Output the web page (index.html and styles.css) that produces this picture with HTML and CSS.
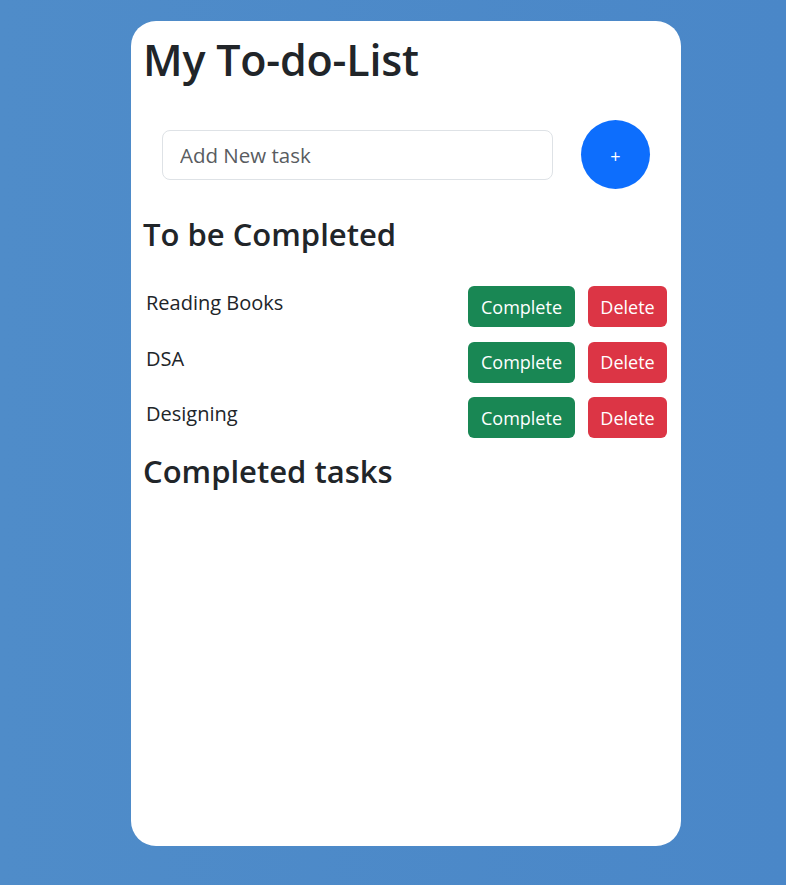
FILE: index.html
```html
<!DOCTYPE html>
<html lang="en">
<head>
<meta charset="utf-8">
<title>My To-do-List</title>
<link rel="stylesheet" href="styles.css">
</head>
<body>
<main class="card">
  <h1 class="title">My To-do-List</h1>
  <div class="add-row">
    <input class="task-input" type="text" placeholder="Add New task">
    <button class="add-btn" type="button">+</button>
  </div>
  <h2 class="section">To be Completed</h2>
  <ul class="tasks">
    <li class="task">
      <span class="task-name">Reading Books</span>
      <div class="actions">
        <button class="btn btn-complete" type="button">Complete</button>
        <button class="btn btn-delete" type="button">Delete</button>
      </div>
    </li>
    <li class="task">
      <span class="task-name">DSA</span>
      <div class="actions">
        <button class="btn btn-complete" type="button">Complete</button>
        <button class="btn btn-delete" type="button">Delete</button>
      </div>
    </li>
    <li class="task">
      <span class="task-name">Designing</span>
      <div class="actions">
        <button class="btn btn-complete" type="button">Complete</button>
        <button class="btn btn-delete" type="button">Delete</button>
      </div>
    </li>
  </ul>
  <h2 class="section section-done">Completed tasks</h2>
</main>
</body>
</html>
```
FILE: styles.css
```css
* { box-sizing: border-box; }
html, body { margin: 0; padding: 0; }
body {
  min-height: 885px;
  background: linear-gradient(90deg, #4f8cc9 0%, #4a87c8 100%);
  font-family: "Open Sans", "Noto Sans", sans-serif;
  color: #212529;
  padding: 21px 0 39px 131px;
}
.card {
  width: 550px;
  height: 825px;
  background: #fff;
  border-radius: 25px;
  padding: 12px 12px 0 12px;
}
.title {
  margin: 0;
  font-size: 43px;
  font-weight: 600;
  line-height: 53px;
  letter-spacing: -0.2px;
}
.add-row {
  display: flex;
  align-items: center;
  gap: 28px;
  padding-left: 19px;
  margin-top: 34px;
  height: 69px;
}
.task-input {
  width: 391px;
  height: 50px;
  border: 1px solid #dee2e6;
  border-radius: 8px;
  padding: 0 17px;
  font-family: inherit;
  font-size: 20.5px;
  color: #212529;
  outline: none;
}
.task-input::placeholder { color: #595c5f; opacity: 1; }
.add-btn {
  width: 69px;
  height: 69px;
  border-radius: 50%;
  border: none;
  background: #0d6efd;
  color: #fff;
  font-family: inherit;
  font-size: 18px;
  padding: 2px 0 0 0;
}
.section {
  margin: 0;
  font-size: 31px;
  font-weight: 600;
  line-height: 40px;
}
.add-row + .section { margin-top: 25px; }
.tasks {
  list-style: none;
  margin: 32px 0 0 0;
  padding: 0 2px 0 3px;
}
.task {
  display: flex;
  justify-content: space-between;
  align-items: flex-start;
  height: 55.5px;
}
.task-name {
  font-size: 20px;
  line-height: 28px;
  margin-top: 3px;
}
.actions {
  display: flex;
  gap: 13px;
}
.btn {
  height: 41px;
  border: none;
  border-radius: 6px;
  color: #fff;
  font-family: inherit;
  font-size: 18px;
  padding: 0;
}
.btn-complete { background: #198754; width: 107px; }
.btn-delete { background: #dc3545; width: 79px; }
.section-done { margin-top: -2px; }
```
